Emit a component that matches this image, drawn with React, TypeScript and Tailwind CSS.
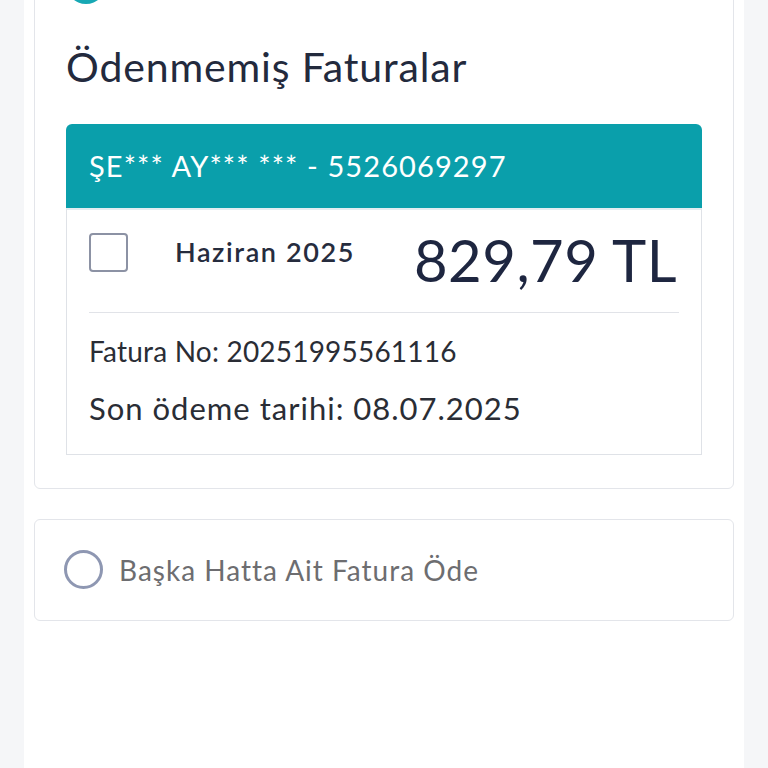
import { FC } from 'react';

const font = { fontFamily: 'Lato, "Noto Sans", sans-serif' };

const InvoiceBox: FC = () => (
  <div className="flex flex-col">
    <div className="flex h-[84px] items-center rounded-t-[6px] bg-[#0a9fab] px-[23px]">
      <span className="text-[29px] tracking-[1.1px] text-white">ŞE*** AY*** *** - 5526069297</span>
    </div>
    <div className="flex flex-col border border-t-[2px] border-[#dfe2e7] border-t-[#e3edf1] px-[22px] pb-[22px]">
      <div className="flex items-start pt-[21px]">
        <div className="mt-[2px] h-[39px] w-[39px] rounded-[4px] border-2 border-[#8c92a4] bg-white" />
        <span className="ml-[47px] mt-[1px] text-[27px] font-semibold tracking-[1.6px] text-[#262c3e]">
          Haziran 2025
        </span>
        <span className="ml-auto mr-[2px] text-[58px] leading-none tracking-[0.5px] text-[#1e2640]">
          829,79 TL
        </span>
      </div>
      <div className="mt-[23px] h-px bg-[#e1e3e8]" />
      <span className="mt-[17px] text-[28px] tracking-[0.2px] text-[#2a2d35]">Fatura No: 20251995561116</span>
      <span className="mt-[13px] text-[31px] tracking-[1px] text-[#2a2d35]">Son ödeme tarihi: 08.07.2025</span>
    </div>
  </div>
);

const App: FC = () => {
  return (
    <div className="flex min-h-screen justify-center bg-[#f5f6f8] px-[24px]" style={font}>
      <div className="flex w-full flex-col bg-white px-[10px] pb-[140px]">
        <div className="-mt-[60px] flex flex-col rounded-[6px] border border-[#e3e5ea] px-[31px] pb-[33px]">
          <div className="mt-[23px] h-[40px] w-[40px] rounded-full bg-[#17a8b4]" />
          <h2 className="mt-[39px] text-[41px] leading-[48px] tracking-[0.85px] text-[#232a3d]">
            Ödenmemiş Faturalar
          </h2>
          <div className="mt-[33px]">
            <InvoiceBox />
          </div>
        </div>
        <div className="mt-[30px] flex h-[102px] items-center gap-[16px] rounded-[6px] border border-[#e3e5ea] px-[29px]">
          <div className="h-[39px] w-[39px] rounded-full border-[3px] border-[#8e97b2]" />
          <span className="text-[28px] tracking-[1px] text-[#6d6d70]">Başka Hatta Ait Fatura Öde</span>
        </div>
      </div>
    </div>
  );
};

export default App;
